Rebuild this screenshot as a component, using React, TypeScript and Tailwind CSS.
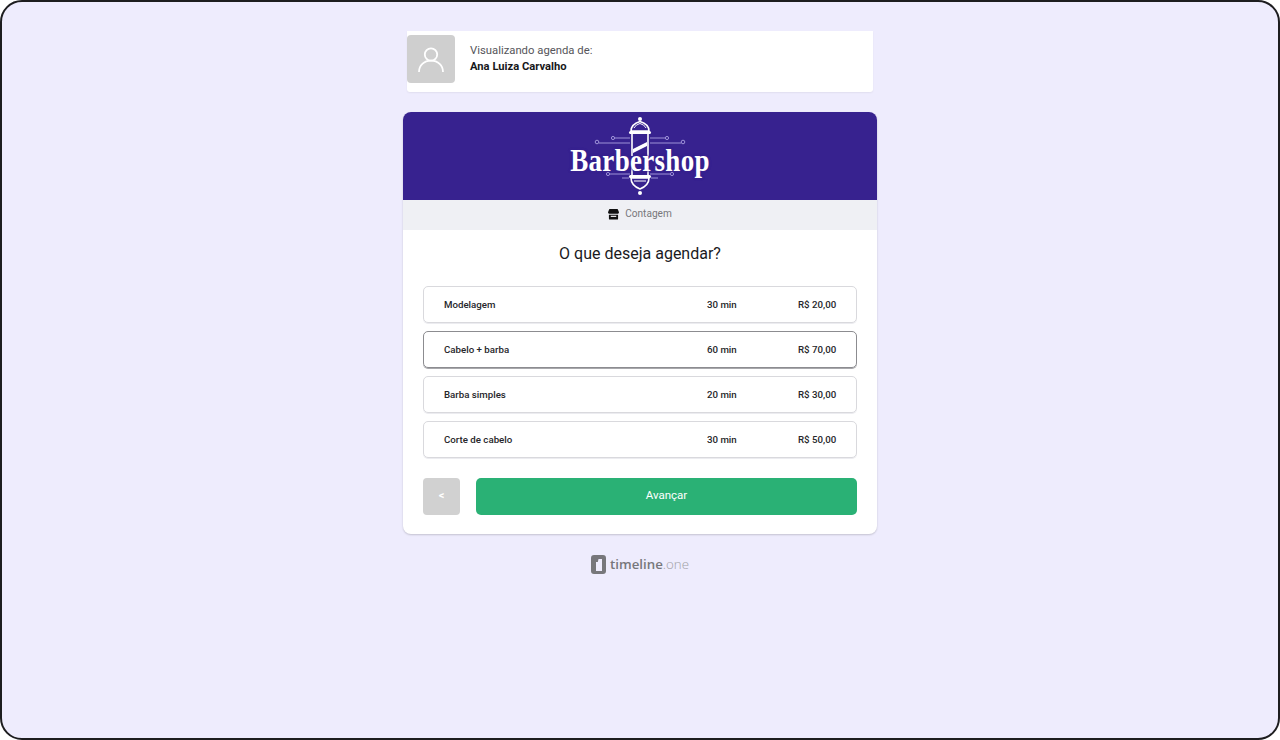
import React from 'react';

interface Service {
  name: string;
  duration: string;
  price: string;
  selected?: boolean;
}

const services: Service[] = [
  { name: 'Modelagem', duration: '30 min', price: 'R$ 20,00' },
  { name: 'Cabelo + barba', duration: '60 min', price: 'R$ 70,00', selected: true },
  { name: 'Barba simples', duration: '20 min', price: 'R$ 30,00' },
  { name: 'Corte de cabelo', duration: '30 min', price: 'R$ 50,00' },
];

// Barber pole with the little scroll ornaments on either side
const PoleLogo = () => (
  <svg width="142" height="80" viewBox="0 0 142 80" fill="none" stroke="#fff" strokeWidth="1.6">
    {/* top cap */}
    <circle cx="71" cy="3" r="2" fill="#fff" stroke="none" />
    <path d="M62 15c0-5 4-8 9-9.500 5 1.500 9 4.500 9 9.500z" />
    <path d="M65 12c1-2 3-3.500 6-4.500 3 1 5 2.500 6 4.500" strokeWidth="1" />
    <rect x="60" y="15" width="22" height="3" rx="1.500" fill="#fff" stroke="none" />
    {/* body */}
    <path d="M63 18v22M79 18v22" />
    <path d="M64 33l14-7v4l-14 7z" fill="#fff" stroke="none" />
    <path d="M63 50v9M79 50v9" />
    {/* bottom cap */}
    <rect x="60" y="59" width="22" height="3" rx="1.500" fill="#fff" stroke="none" />
    <path d="M62 62h18c0 6-4 9-9 11-5-2-9-5-9-11z" />
    <path d="M65 65h12" strokeWidth="1" />
    <circle cx="71" cy="77" r="2" fill="#fff" stroke="none" />
    {/* ornaments */}
    <g stroke="#a99fe0" strokeWidth="0.9">
      <path d="M30 27h31M81 27h31M46 22h15M81 22h15" />
      <circle cx="28" cy="26" r="1.800" />
      <circle cx="114" cy="26" r="1.800" />
      <circle cx="44" cy="22" r="1.600" />
      <circle cx="98" cy="22" r="1.600" />
      <path d="M41 58h20M81 58h20M53 62h7M82 62h7" />
      <circle cx="39" cy="58" r="1.600" />
      <circle cx="103" cy="58" r="1.600" />
    </g>
  </svg>
);

const App: React.FC = () => {
  return (
    <div className="h-[740px] w-full bg-white font-['Roboto',sans-serif]">
      <div className="flex h-full flex-col items-center rounded-[22px] border-2 border-[#1d1d1f] bg-[#eeecfd] pt-[29px]">
        {/* Viewing schedule of */}
        <div className="flex h-[61px] w-[466px] shrink-0 items-start rounded-b-[3px] bg-white pt-1 shadow-[0_1px_2px_rgba(0,0,0,0.06)]">
          <div className="flex h-12 w-12 items-center justify-center rounded-[4px] bg-[#cfcfcf]">
            <svg width="30" height="30" viewBox="0 0 30 30" fill="none" stroke="#fff" strokeWidth="1.8">
              <circle cx="15" cy="10.500" r="6.200" />
              <path d="M3 28c0-6.500 5-11.300 12-11.300S27 21.500 27 28" />
            </svg>
          </div>
          <div className="ml-[15px] mt-[8px] flex flex-col">
            <span className="text-[11.3px] leading-4 text-[#55555a]">Visualizando agenda de:</span>
            <span className="text-[11.2px] font-bold leading-4 text-[#17171a]">Ana Luiza Carvalho</span>
          </div>
        </div>

        {/* Card */}
        <div className="mt-5 w-[474px] shrink-0 overflow-hidden rounded-lg bg-white shadow-[0_1px_2px_rgba(0,0,0,0.18)]">
          <div className="relative flex h-[88px] items-center justify-center bg-[#37228f]">
            <PoleLogo />
            <span className="absolute inset-x-0 top-[32px] scale-y-[1.2] text-center font-['Liberation_Serif',serif] text-[27px] font-bold leading-[32px] tracking-[0.3px] text-white [text-shadow:0_0_2px_#37228f,0_0_2px_#37228f]">
              Barbershop
            </span>
          </div>
          <div className="flex h-[30px] items-center justify-center gap-[6px] bg-[#eff0f4] pb-[2px] text-[10.1px] text-[#77777b]">
            <svg width="11" height="11" viewBox="0 0 12 12" fill="#111">
              <path d="M1.500 0h9l1.500 3.500c0 .9-.7 1.700-1.500 1.700H1.500C.7 5.200 0 4.400 0 3.500z" />
              <path d="M1 6.200h10V10.500a1 1 0 0 1-1 1H2a1 1 0 0 1-1-1z" />
              <rect x="3" y="7.400" width="6" height="1.200" fill="#fff" />
            </svg>
            <span>Contagem</span>
          </div>

          <div className="flex flex-col px-5 pb-[19px]">
            <h1 className="mt-[14px] text-center text-[16px] leading-5 text-[#1a1a1e]">O que deseja agendar?</h1>

            <div className="mt-[22px] flex flex-col gap-2">
              {services.map((service) => (
                <div
                  key={service.name}
                  className={`flex h-[37px] items-center rounded-[5px] border px-5 pt-px text-[9.7px] font-medium text-[#26262a] ${
                    service.selected
                      ? 'border-[#8c8c90] shadow-[0_1px_0_#a8a8ac]'
                      : 'border-[#d9d9dd] shadow-[0_1px_0_#ececf0]'
                  }`}
                >
                  <span className="flex-1">{service.name}</span>
                  <span className="w-[91px]">{service.duration}</span>
                  <span className="w-[38px] whitespace-nowrap text-right">{service.price}</span>
                </div>
              ))}
            </div>

            <div className="mt-5 flex gap-4">
              <button className="flex h-[37px] w-[37px] items-center justify-center rounded-[4px] bg-[#d1d1d1] text-[11px] font-bold text-white">
                &lt;
              </button>
              <button className="h-[37px] flex-1 rounded-[5px] bg-[#2ab175] pb-px text-[11.5px] text-white">
                Avançar
              </button>
            </div>
          </div>
        </div>

        {/* Footer logo */}
        <div className="mt-[21px] flex items-center gap-1 font-['Open_Sans',sans-serif]">
          <svg width="15" height="19" viewBox="0 0 15 19">
            <path
              fillRule="evenodd"
              fill="#77777b"
              d="M3 0h9a3 3 0 0 1 3 3v13a3 3 0 0 1-3 3H3a3 3 0 0 1-3-3V3a3 3 0 0 1 3-3zM5 7v9h6V4H7.500L6.800 7z"
            />
          </svg>
          <span className="text-[13.3px] font-semibold leading-[19px] text-[#77777b]">timeline</span>
          <span className="-ml-[4px] text-[13.3px] font-light leading-[19px] text-[#a0a0a4]">.one</span>
        </div>
      </div>
    </div>
  );
};

export default App;
